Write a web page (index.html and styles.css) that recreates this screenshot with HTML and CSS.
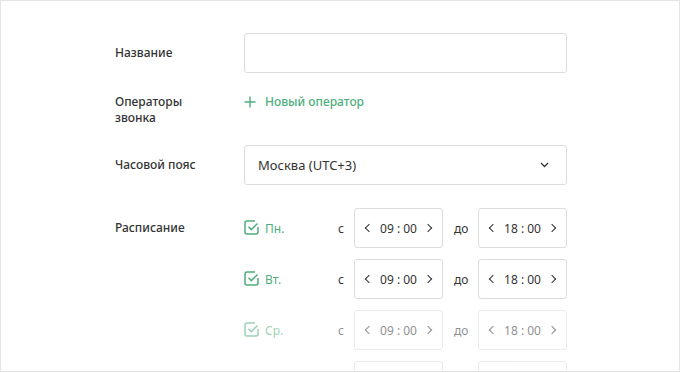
FILE: index.html
```html
<!DOCTYPE html>
<html>
<head>
    <meta charset="UTF-8">
    <title>Новая линия</title>
    <link rel="stylesheet" href="styles.css">
</head>
<body>
    <div class="frame">
        <form class="form">
            <div class="field">
                <label class="field-label" for="name">Название</label>
                <input class="text-input" type="text" id="name">
            </div>
            <div class="field field-operators">
                <div class="field-label">Операторы<br>звонка</div>
                <a class="add-link" href="#">
                    <svg width="12" height="12" viewBox="0 0 12 12"><path d="M6 0.5v11M0.5 6h11" stroke="currentColor" stroke-width="1.4" fill="none"/></svg>
                    Новый оператор
                </a>
            </div>
            <div class="field field-tz">
                <div class="field-label">Часовой пояс</div>
                <div class="select">
                    <span>Москва (UTC+3)</span>
                    <svg width="9" height="6" viewBox="0 0 9 6"><path d="M1 1l3.5 3.5L8 1" stroke="#333" stroke-width="1.3" fill="none"/></svg>
                </div>
            </div>
            <div class="field field-schedule">
                <div class="field-label">Расписание</div>
                <div class="schedule">
                    <div class="day">
                        <div class="day-check">
                            <svg width="15" height="15" viewBox="0 0 15 15"><path d="M11 1H3a2 2 0 0 0-2 2v9a2 2 0 0 0 2 2h9a2 2 0 0 0 2-2V7" stroke="currentColor" stroke-width="1.5" fill="none"/><path d="M4.5 6.8l2.8 2.8L13.5 3.5" stroke="currentColor" stroke-width="1.5" fill="none"/></svg>
                            <span>Пн.</span>
                        </div>
                        <span class="prep">с</span>
                        <div class="time"><i class="arrow arrow-left"></i><span>09 : 00</span><i class="arrow arrow-right"></i></div>
                        <span class="prep prep-to">до</span>
                        <div class="time"><i class="arrow arrow-left"></i><span>18 : 00</span><i class="arrow arrow-right"></i></div>
                    </div>
                    <div class="day">
                        <div class="day-check">
                            <svg width="15" height="15" viewBox="0 0 15 15"><path d="M11 1H3a2 2 0 0 0-2 2v9a2 2 0 0 0 2 2h9a2 2 0 0 0 2-2V7" stroke="currentColor" stroke-width="1.5" fill="none"/><path d="M4.5 6.8l2.8 2.8L13.5 3.5" stroke="currentColor" stroke-width="1.5" fill="none"/></svg>
                            <span>Вт.</span>
                        </div>
                        <span class="prep">с</span>
                        <div class="time"><i class="arrow arrow-left"></i><span>09 : 00</span><i class="arrow arrow-right"></i></div>
                        <span class="prep prep-to">до</span>
                        <div class="time"><i class="arrow arrow-left"></i><span>18 : 00</span><i class="arrow arrow-right"></i></div>
                    </div>
                    <div class="day day-off">
                        <div class="day-check">
                            <svg width="15" height="15" viewBox="0 0 15 15"><path d="M11 1H3a2 2 0 0 0-2 2v9a2 2 0 0 0 2 2h9a2 2 0 0 0 2-2V7" stroke="currentColor" stroke-width="1.5" fill="none"/><path d="M4.5 6.8l2.8 2.8L13.5 3.5" stroke="currentColor" stroke-width="1.5" fill="none"/></svg>
                            <span>Ср.</span>
                        </div>
                        <span class="prep">с</span>
                        <div class="time"><i class="arrow arrow-left"></i><span>09 : 00</span><i class="arrow arrow-right"></i></div>
                        <span class="prep prep-to">до</span>
                        <div class="time"><i class="arrow arrow-left"></i><span>18 : 00</span><i class="arrow arrow-right"></i></div>
                    </div>
                    <div class="day day-off">
                        <div class="day-check"></div>
                        <span class="prep"></span>
                        <div class="time"></div>
                        <span class="prep prep-to"></span>
                        <div class="time"></div>
                    </div>
                </div>
            </div>
        </form>
    </div>
</body>
</html>
```

FILE: styles.css
```css
body {
    margin: 0;
    font-family: "Noto Sans", sans-serif;
    color: #333;
    background-color: #fff;
}
.frame {
    width: 680px;
    height: 372px;
    box-sizing: border-box;
    border: 1px solid #e4e4e4;
    overflow: hidden;
}
.form {
    padding: 32px 0 0 114px;
}
.field {
    display: flex;
    align-items: flex-start;
}
.field-label {
    width: 129px;
    flex-shrink: 0;
    font-size: 12px;
    font-weight: 500;
    line-height: 40px;
    color: #333;
}
.text-input {
    width: 323px;
    height: 40px;
    box-sizing: border-box;
    margin: 0;
    border: 1px solid #dcdcdc;
    border-radius: 3px;
    font-family: inherit;
    font-size: 13px;
}
.field-operators {
    margin-top: 21px;
}
.field-operators .field-label {
    line-height: 15.5px;
}
.add-link {
    display: flex;
    align-items: center;
    gap: 9px;
    font-size: 12px;
    font-weight: 500;
    line-height: 15px;
    color: #4dae7b;
    text-decoration: none;
}
.field-tz {
    margin-top: 20px;
}
.select {
    width: 323px;
    height: 40px;
    box-sizing: border-box;
    border: 1px solid #dcdcdc;
    border-radius: 3px;
    padding: 0 17px 0 13px;
    display: flex;
    align-items: center;
    justify-content: space-between;
    font-size: 13px;
}
.field-schedule {
    margin-top: 23px;
}
.schedule {
    display: flex;
    flex-direction: column;
    gap: 11px;
}
.day {
    display: grid;
    grid-template-columns: 94px 16px 89px 35px 89px;
    align-items: center;
    height: 40px;
    font-size: 12px;
}
.day-off {
    opacity: 0.55;
}
.day-check {
    display: flex;
    align-items: center;
    gap: 6px;
    color: #4dae7b;
}
.day-check svg {
    margin-top: -1px;
}
.prep {
    font-size: 12px;
}
.prep-to {
    padding-left: 11px;
}
.time {
    height: 40px;
    box-sizing: border-box;
    border: 1px solid #dcdcdc;
    border-radius: 3px;
    display: flex;
    align-items: center;
    justify-content: space-between;
    padding: 0 11px;
    font-size: 12px;
}
.arrow {
    width: 5px;
    height: 5px;
    border-top: 1.3px solid #333;
    border-left: 1.3px solid #333;
}
.arrow-left {
    transform: rotate(-45deg);
}
.arrow-right {
    transform: rotate(135deg);
}
```
